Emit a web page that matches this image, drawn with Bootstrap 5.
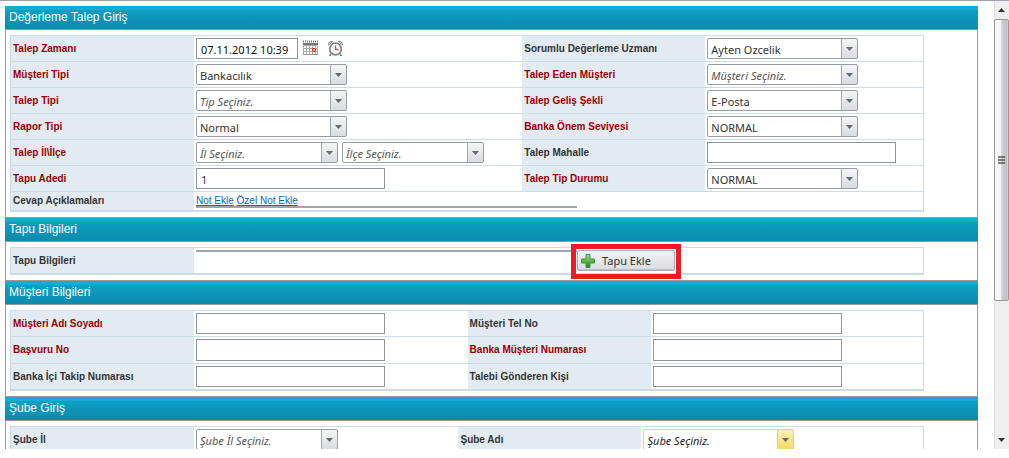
<!DOCTYPE html>
<html lang="tr">
<head>
<meta charset="utf-8">
<meta name="viewport" content="width=device-width, initial-scale=1">
<title>Değerleme Talep Giriş</title>
<link href="https://cdn.jsdelivr.net/npm/bootstrap@5.3.0/dist/css/bootstrap.min.css" rel="stylesheet">
<style>
  body { font-family: "Liberation Sans", Arial, sans-serif; font-size: 10px; line-height: 12px; color: #333; background: #fff; padding-bottom: 9px; }
  .viewport { border-top: 1px solid #a0a4ae; }
  .content-pane { padding: 5px 16px 0 5px; min-width: 0; }

  .panel-title { height: 23px; padding-left: 4px; font-size: 12px; line-height: 23px; font-weight: 400; color: #fff;
    background: linear-gradient(#16abd1 0 4px, #0e9fc5 4px, #0c8aac 100%); }
  .panel-body { border: 1px solid #999; padding: 5px 53px 5px 4px; }

  .form-grid { width: 100%; table-layout: fixed; border-collapse: separate; border-spacing: 0;
    border: solid #ccdce6; border-width: 0 1px 2px 1px; }
  .form-grid th, .form-grid td { border-top: 1px solid #ccdce6; padding: 2px; vertical-align: middle; }
  .form-grid th { background: #e3ebf2; font-weight: 700; }
  .form-grid label { display: block; }
  .form-grid .required { color: #990000; }
  .col-label { width: 183px; }
  .col-main { width: 36%; }
  .col-half { width: 30%; }
  .col-branch { width: 29%; }

  .field, .combo, .tool-btn { font-family: "Noto Sans", "Open Sans", sans-serif; font-size: 11px; height: 21px; color: #333; }
  .field { width: 189px; border: 1px solid #8f949e; padding: 2px 4px 0; line-height: 16px; background: #fff; display: block; }
  .field-date { width: 102px; color: #111; }
  .tall .field { height: 22px; }
  .combo { width: 151px; appearance: none; border: 1px solid #999ca4; border-radius: 2px; padding: 2px 18px 0 3px; line-height: 16px; display: block;
    background:
      url("data:image/svg+xml,%3Csvg xmlns='http://www.w3.org/2000/svg' width='7' height='4'%3E%3Cpath d='M0 0h7L3.500 4z' fill='%23666a70'/%3E%3C/svg%3E") no-repeat right 4px top 8px,
      linear-gradient(#a3a8b1, #a3a8b1) no-repeat right 15px top / 1px 100%,
      linear-gradient(#f4f5f6, #d9dce0) no-repeat right top / 15px 100%,
      #fff; }
  .combo-narrow { width: 142px; }
  .combo.hint { font-style: italic; color: #555; }
  .combo.combo-active { border-color: #f0d450; color: #222;
    background:
      url("data:image/svg+xml,%3Csvg xmlns='http://www.w3.org/2000/svg' width='7' height='4'%3E%3Cpath d='M0 0h7L3.500 4z' fill='%23666a70'/%3E%3C/svg%3E") no-repeat right 4px top 8px,
      linear-gradient(#ecd058, #ecd058) no-repeat right 15px top / 1px 100%,
      linear-gradient(#fdf0b4, #f6d968) no-repeat right top / 15px 100%,
      #fff; }
  .icon-btn { border: 0; background: none; padding: 0; line-height: 0; }

  .form-grid .note-row th, .form-grid .note-row td { padding-top: 1px; }
  .note-list { width: 381px; height: 15px; line-height: 16px; border-bottom: 2px solid #a0a6b0; }
  .note-list a { color: #0066cc; }
  .deed-list { width: 381px; border-top: 2px solid #a0a6b0; }
  .tool-btn { width: 98px; border: 1px solid #a9afb9; border-radius: 2px; padding: 0 3px; background: linear-gradient(#f3f3f4, #d9dbdf); line-height: 19px; box-shadow: inset 0 -1px 0 #b9c0c9; }
  .tool-btn span { margin-left: 7px; }
  .highlight { position: absolute; inset: -6px -6px -8px; border: 5px solid #ed1c24; pointer-events: none; }

  .scroll-rail { width: 15px; background: #efefef; box-shadow: inset 1px 0 0 #e2e2e2; }
  .scroll-end { height: 18px; }
  .scroll-thumb { height: 63%; flex: none; border: 1px solid #96979a; border-radius: 2px; background: linear-gradient(90deg, #f6f6f6 0 45%, #d5d5d8 50%, #bcbdc2 90%, #dcdcde); }
</style>
</head>
<body class="vh-100 d-flex flex-column overflow-hidden">
<div class="viewport d-flex flex-fill overflow-hidden">
  <main class="content-pane flex-fill">
    <form>
      <section>
        <h2 class="panel-title m-0">Değerleme Talep Giriş</h2>
        <div class="panel-body">
          <table class="form-grid">
            <colgroup><col class="col-label"><col class="col-main"><col class="col-label"><col></colgroup>
            <tr>
              <th scope="row"><label class="required" for="zaman">Talep Zamanı</label></th>
              <td>
                <div class="d-flex align-items-center">
                  <input class="field field-date" id="zaman" type="text" value="07.11.2012 10:39">
                  <button class="icon-btn ms-1" type="button" aria-label="Takvim">
                    <svg width="17" height="17" viewBox="0 0 17 17"><path d="M1 1.500h15" stroke="#777" stroke-width="2" stroke-dasharray="1 1"/><path d="M1 3h15v2H1z" fill="#777"/><path d="M1.500 5.500h14v9h-14z" fill="#fff" stroke="#aaa"/><path d="M2 8.500h13M2 11.500h13M4.500 5v9M7.500 5v9M10.500 5v9M13.500 5v9" stroke="#aaa"/><path d="M1 14.500h15" stroke="#999"/><path d="M10.500 8.500h3v3h-3z" fill="#ee9a8c" stroke="#d8432f"/></svg>
                  </button>
                  <button class="icon-btn ms-2" type="button" aria-label="Saat">
                    <svg width="17" height="17" viewBox="0 0 17 17" fill="none"><path d="M4 14l-1.500 2M13 14l1.500 2" stroke="#777" stroke-width="1.500"/><path d="M1.500 5C1 2.500 3 1 5.500 1.500zM15.500 5C16 2.500 14 1 11.500 1.500z" fill="#ddd" stroke="#888"/><circle cx="8.500" cy="9" r="5.800" fill="#fff" stroke="#888" stroke-width="1.800"/><path d="M8.500 5.500V9.500H11.500" stroke="#d8543f" stroke-width="1.300"/></svg>
                  </button>
                </div>
              </td>
              <th scope="row"><label for="uzman">Sorumlu Değerleme Uzmanı</label></th>
              <td><select class="combo" id="uzman"><option>Ayten Ozcelik</option></select></td>
            </tr>
            <tr>
              <th scope="row"><label class="required" for="mtipi">Müşteri Tipi</label></th>
              <td><select class="combo" id="mtipi"><option>Bankacılık</option></select></td>
              <th scope="row"><label class="required" for="eden">Talep Eden Müşteri</label></th>
              <td><select class="combo hint" id="eden"><option>Müşteri Seçiniz.</option></select></td>
            </tr>
            <tr>
              <th scope="row"><label class="required" for="ttipi">Talep Tipi</label></th>
              <td><select class="combo hint" id="ttipi"><option>Tip Seçiniz.</option></select></td>
              <th scope="row"><label class="required" for="gelis">Talep Geliş Şekli</label></th>
              <td><select class="combo" id="gelis"><option>E-Posta</option></select></td>
            </tr>
            <tr>
              <th scope="row"><label class="required" for="rapor">Rapor Tipi</label></th>
              <td><select class="combo" id="rapor"><option>Normal</option></select></td>
              <th scope="row"><label class="required" for="onem">Banka Önem Seviyesi</label></th>
              <td><select class="combo" id="onem"><option>NORMAL</option></select></td>
            </tr>
            <tr>
              <th scope="row"><label class="required" for="il">Talep İl\İlçe</label></th>
              <td>
                <div class="d-flex gap-1">
                  <select class="combo combo-narrow hint" id="il"><option>İl Seçiniz.</option></select>
                  <select class="combo combo-narrow hint" aria-label="İlçe"><option>İlçe Seçiniz.</option></select>
                </div>
              </td>
              <th scope="row"><label for="mahalle">Talep Mahalle</label></th>
              <td><input class="field" id="mahalle" type="text"></td>
            </tr>
            <tr>
              <th scope="row"><label class="required" for="adet">Tapu Adedi</label></th>
              <td><input class="field" id="adet" type="text" value="1"></td>
              <th scope="row"><label class="required" for="durum">Talep Tip Durumu</label></th>
              <td><select class="combo" id="durum"><option>NORMAL</option></select></td>
            </tr>
            <tr class="note-row">
              <th scope="row">Cevap Açıklamaları</th>
              <td colspan="3"><div class="note-list"><a href="#">Not Ekle</a> <a href="#">Özel Not Ekle</a></div></td>
            </tr>
          </table>
        </div>
      </section>

      <section>
        <h2 class="panel-title m-0">Tapu Bilgileri</h2>
        <div class="panel-body">
          <table class="form-grid">
            <colgroup><col class="col-label"><col></colgroup>
            <tr>
              <th scope="row">Tapu Bilgileri</th>
              <td>
                <div class="d-flex align-items-start">
                  <div class="deed-list"></div>
                  <div class="position-relative">
                    <button class="tool-btn d-flex align-items-center" type="button">
                      <svg width="14" height="14" viewBox="0 0 14 14"><defs><linearGradient id="leaf" x2="0" y2="1"><stop stop-color="#a5dc8e"/><stop offset=".5" stop-color="#5fb64b"/><stop offset="1" stop-color="#1f7a25"/></linearGradient></defs><path d="M5 .5h4V5h4.500v4H9v4.500H5V9H.5V5H5z" fill="url(#leaf)" stroke="#3c9338"/></svg>
                      <span>Tapu Ekle</span>
                    </button>
                    <div class="highlight"></div>
                  </div>
                </div>
              </td>
            </tr>
          </table>
        </div>
      </section>

      <section>
        <h2 class="panel-title m-0">Müşteri Bilgileri</h2>
        <div class="panel-body">
          <table class="form-grid">
            <colgroup><col class="col-label"><col class="col-half"><col class="col-label"><col></colgroup>
            <tr>
              <th scope="row"><label class="required" for="ad">Müşteri Adı Soyadı</label></th>
              <td><input class="field" id="ad" type="text"></td>
              <th scope="row"><label for="tel">Müşteri Tel No</label></th>
              <td><input class="field" id="tel" type="text"></td>
            </tr>
            <tr class="tall">
              <th scope="row"><label class="required" for="basvuru">Başvuru No</label></th>
              <td><input class="field" id="basvuru" type="text"></td>
              <th scope="row"><label class="required" for="mno">Banka Müşteri Numarası</label></th>
              <td><input class="field" id="mno" type="text"></td>
            </tr>
            <tr>
              <th scope="row"><label for="takip">Banka İçi Takip Numarası</label></th>
              <td><input class="field" id="takip" type="text"></td>
              <th scope="row"><label for="kisi">Talebi Gönderen Kişi</label></th>
              <td><input class="field" id="kisi" type="text"></td>
            </tr>
          </table>
        </div>
      </section>

      <section>
        <h2 class="panel-title m-0">Şube Giriş</h2>
        <div class="panel-body">
          <table class="form-grid">
            <colgroup><col class="col-label"><col class="col-branch"><col class="col-label"><col></colgroup>
            <tr>
              <th scope="row"><label for="subeil">Şube İl</label></th>
              <td><select class="combo combo-narrow hint" id="subeil"><option>Şube İl Seçiniz.</option></select></td>
              <th scope="row"><label for="sube">Şube Adı</label></th>
              <td><select class="combo hint combo-active" id="sube"><option>Şube Seçiniz.</option></select></td>
            </tr>
          </table>
        </div>
      </section>
    </form>
  </main>

  <div class="scroll-rail d-flex flex-column flex-shrink-0" aria-hidden="true">
    <div class="scroll-end d-flex align-items-center justify-content-center"><svg width="7" height="4"><path d="M0 4h7L3.500 0z" fill="#333"/></svg></div>
    <div class="scroll-thumb d-flex align-items-center justify-content-center"><svg width="7" height="8"><path d="M0 1h7M0 4h7M0 7h7" stroke="#555" stroke-width="1.500"/></svg></div>
    <div class="scroll-end mt-auto d-flex align-items-center justify-content-center"><svg width="7" height="4"><path d="M0 0h7L3.500 4z" fill="#333"/></svg></div>
  </div>
</div>
<script src="https://cdn.jsdelivr.net/npm/bootstrap@5.3.0/dist/js/bootstrap.bundle.min.js"></script>
</body>
</html>
